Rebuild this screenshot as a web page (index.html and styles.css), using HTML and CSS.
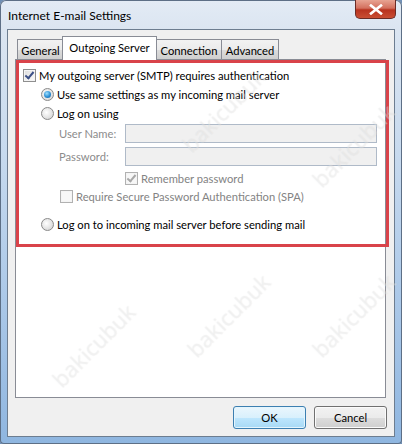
FILE: index.html
```html
<!DOCTYPE html>
<html lang="en">
<head>
    <meta charset="UTF-8">
    <title>Internet E-mail Settings</title>
    <link rel="stylesheet" href="styles.css">
</head>
<body>

<div class="window">
    <div class="titlebar">
        <span class="title">Internet E-mail Settings</span>
        <span class="close">
            <svg width="14" height="11" viewBox="0 0 14 11"><path d="M2 1.5 L12 9.5 M12 1.5 L2 9.5" stroke="#fff" stroke-width="2.6" stroke-linecap="square"/></svg>
        </span>
    </div>

    <div class="client">
        <div class="tabs">
            <div class="tab tab-general">General</div>
            <div class="tab active tab-outgoing">Outgoing Server</div>
            <div class="tab tab-connection">Connection</div>
            <div class="tab tab-advanced">Advanced</div>
        </div>

        <div class="panel">
            <div class="row row-auth">
                <span class="check checked"></span>
                <span>My outgoing server (SMTP) requires authentication</span>
            </div>
            <div class="row row-same">
                <span class="radio selected"></span>
                <span>Use same settings as my incoming mail server</span>
            </div>
            <div class="row row-logon">
                <span class="radio"></span>
                <span>Log on using</span>
            </div>
            <div class="field field-user">
                <span class="field-label">User Name:</span>
                <span class="textbox"></span>
            </div>
            <div class="field field-pass">
                <span class="field-label">Password:</span>
                <span class="textbox"></span>
            </div>
            <div class="row row-remember disabled">
                <span class="check checked off"></span>
                <span>Remember password</span>
            </div>
            <div class="row row-spa disabled">
                <span class="check off"></span>
                <span>Require Secure Password Authentication (SPA)</span>
            </div>
            <div class="row row-before">
                <span class="radio"></span>
                <span>Log on to incoming mail server before sending mail</span>
            </div>
        </div>

        <div class="buttons">
            <button class="btn default">OK</button>
            <button class="btn">Cancel</button>
        </div>
    </div>

    <!-- red annotation frame and watermarks sit over the dialog -->
    <div class="highlight"></div>
    <span class="mark" style="left:170px; top:95px">bakicubuk</span>
    <span class="mark" style="left:300px; top:130px">bakicubuk</span>
    <span class="mark" style="left:175px; top:300px">bakicubuk</span>
    <span class="mark" style="left:300px; top:300px">bakicubuk</span>
    <span class="mark" style="left:40px; top:330px">bakicubuk</span>
</div>

</body>
</html>
```

FILE: styles.css
```css
body {
    margin: 0;
    font-family: Lato, "Noto Sans", sans-serif;
    font-size: 11.2px;
    color: #000;
    background: #6f8fb5;
}
.window {
    position: relative;
    width: 402px;
    height: 444px;
    box-sizing: border-box;
    padding: 0 7px 7px 7px;
    display: flex;
    flex-direction: column;
    overflow: hidden;
    border-radius: 6px 6px 4px 4px;
    background: linear-gradient(to bottom, #e3ebf5 0px, #dbe5f1 30px, #c6d9ee 160px, #abc8e8 300px, #8fb6e0 444px);
    box-shadow: inset 0 0 0 1px #5d6f86;
}
.titlebar {
    height: 29px;
    display: flex;
    justify-content: space-between;
    align-items: flex-start;
}
.title {
    margin: 8px 0 0 1px;
    font-size: 12px;
    color: #000;
}
.close {
    width: 41px;
    height: 19px;
    margin-right: -1px;
    display: flex;
    align-items: center;
    justify-content: center;
    border: 1px solid #6a2c26;
    border-top: none;
    border-radius: 0 0 5px 5px;
    box-sizing: border-box;
    background: linear-gradient(to bottom, #e8a493 0%, #d3705e 45%, #b8331f 55%, #c94e33 100%);
}
.client {
    flex: 1;
    background: #f0f0f0;
    border: 1px solid #6d7d90;
    display: flex;
    flex-direction: column;
}
.tabs {
    display: flex;
    align-items: flex-end;
    height: 23px;
    margin: 6px 0 0 9px;
}
.tab {
    height: 19px;
    box-sizing: content-box;
    text-align: center;
    line-height: 21px;
    border: 1px solid #898c95;
    border-bottom: none;
    margin-right: -1px;
    background: linear-gradient(to bottom, #f2f2f2, #ebebeb 50%, #dddddd 51%, #cfcfcf);
}
.tab-general {
    width: 45px;
}
.tab-outgoing {
    width: 93px;
}
.tab-connection {
    width: 64px;
}
.tab-advanced {
    width: 56px;
}
.tab.active {
    height: 23px;
    line-height: 21px;
    margin: 0 -1px -1px -1px;
    position: relative;
    z-index: 1;
    background: #fff;
}
.panel {
    height: 337px;
    margin: 0 8px 0 7px;
    background: #fff;
    border: 1px solid #898c95;
    padding: 0 7px;
}
.row {
    display: flex;
    align-items: center;
    gap: 3px;
    height: 19px;
    white-space: nowrap;
}
.row-auth {
    margin-top: 6px;
}
.row-same, .row-logon, .row-before {
    padding-left: 18px;
}
.row-remember {
    height: 18px;
    margin-top: 3px;
    padding-left: 102px;
}
.row-spa {
    height: 18px;
    padding-left: 37px;
}
.row-before {
    margin-top: 10px;
}
.disabled {
    color: #838383;
}
.check {
    width: 13px;
    height: 13px;
    box-sizing: border-box;
    border: 1px solid #8f8f8f;
    background: linear-gradient(135deg, #dcdcdc, #fbfbfb);
    box-shadow: inset 0 0 0 1px #f4f4f4;
    position: relative;
    flex: none;
}
.check.checked::after {
    content: "";
    position: absolute;
    left: 3px;
    top: 0px;
    width: 3px;
    height: 7px;
    border: solid #3b4f86;
    border-width: 0 2px 2px 0;
    transform: rotate(40deg);
}
.check.off {
    border-color: #b1b1b1;
    background: #f7f7f7;
}
.check.checked.off::after {
    border-color: #a8a8a8;
}
.radio {
    width: 13px;
    height: 13px;
    box-sizing: border-box;
    border-radius: 50%;
    border: 1px solid #8a8a8a;
    background: radial-gradient(circle at 40% 40%, #ffffff, #dcdcdc 70%, #c9c9c9);
    position: relative;
    flex: none;
}
.radio.selected::after {
    content: "";
    position: absolute;
    left: 2px;
    top: 2px;
    width: 7px;
    height: 7px;
    border-radius: 50%;
    background: radial-gradient(circle at 40% 35%, #9fe0ff, #2c8fd4 55%, #1b5e9e);
}
.field {
    display: flex;
    align-items: center;
    height: 19px;
    color: #8c8c8c;
    white-space: nowrap;
}
.field-user {
    margin-top: 1px;
}
.field-pass {
    margin-top: 4px;
}
.field-label {
    flex: none;
    width: 102px;
    box-sizing: border-box;
    padding-left: 36px;
}
.textbox {
    width: 252px;
    height: 19px;
    box-sizing: border-box;
    border: 1px solid #afbac8;
    background: #f0f0f0;
}
.buttons {
    display: flex;
    justify-content: flex-end;
    gap: 8px;
    margin: 8px 7px 0 0;
}
.btn {
    width: 73px;
    height: 23px;
    font-family: inherit;
    font-size: 11.2px;
    color: #000;
    border: 1px solid #707070;
    border-radius: 3px;
    background: linear-gradient(to bottom, #f2f2f2, #ebebeb 50%, #dddddd 51%, #cfcfcf);
    box-shadow: inset 0 0 0 1px #fbfbfb;
    padding: 0;
}
.btn.default {
    border-color: #3c7fb1;
    background: linear-gradient(to bottom, #eaf6fd, #d9f0fc 50%, #bee6fd 51%, #a7d9f5);
    box-shadow: inset 0 0 0 1px #e4f5fd;
}
.highlight {
    position: absolute;
    left: 16px;
    top: 60px;
    width: 373px;
    height: 187px;
    box-sizing: border-box;
    border: 3px solid #d9434a;
    pointer-events: none;
}
.mark {
    position: absolute;
    font-family: "Noto Sans", sans-serif;
    font-size: 22px;
    color: rgba(255, 255, 255, 0.3);
    text-shadow: 0 0 1px rgba(150, 150, 150, 0.2);
    transform: rotate(-45deg);
    pointer-events: none;
}
```
